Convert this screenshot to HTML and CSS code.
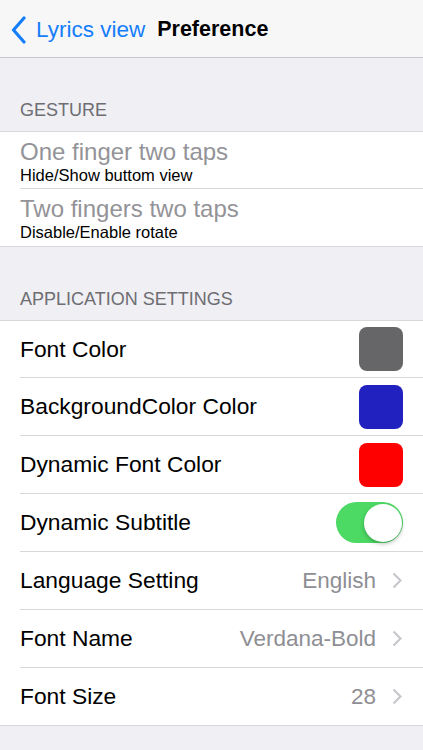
FILE: index.html
```html
<!DOCTYPE html>
<html lang="en">
<head>
    <meta charset="UTF-8">
    <meta name="viewport" content="width=device-width, initial-scale=1.0">
    <title>Preference</title>
    <link rel="stylesheet" href="styles.css">
</head>
<body>
    <header class="nav-bar">
        <a class="back-button" href="#">
            <svg class="back-chevron" width="16" height="28" viewBox="0 0 16 28">
                <path d="M13 2 L2.5 14 L13 26" fill="none" stroke="#157efb" stroke-width="3.2" stroke-linecap="round" stroke-linejoin="round"/>
            </svg>
            <span>Lyrics view</span>
        </a>
        <h1 class="nav-title">Preference</h1>
    </header>

    <main>
        <div class="section-header">GESTURE</div>
        <ul class="group">
            <li class="row row-double">
                <div class="row-title muted">One finger two taps</div>
                <div class="row-subtitle">Hide/Show buttom view</div>
            </li>
            <li class="row row-double">
                <div class="row-title muted">Two fingers two taps</div>
                <div class="row-subtitle">Disable/Enable rotate</div>
            </li>
        </ul>

        <div class="section-header">APPLICATION SETTINGS</div>
        <ul class="group">
            <li class="row">
                <span class="label">Font Color</span>
                <span class="swatch swatch-gray"></span>
            </li>
            <li class="row">
                <span class="label">BackgroundColor Color</span>
                <span class="swatch swatch-blue"></span>
            </li>
            <li class="row">
                <span class="label">Dynamic Font Color</span>
                <span class="swatch swatch-red"></span>
            </li>
            <li class="row">
                <span class="label">Dynamic Subtitle</span>
                <span class="toggle on"><span class="knob"></span></span>
            </li>
            <li class="row">
                <span class="label">Language Setting</span>
                <span class="value">English</span>
                <svg class="chevron" width="10" height="17" viewBox="0 0 10 17"><path d="M1.5 1.5 L8.5 8.5 L1.5 15.5" fill="none" stroke="#c7c7cc" stroke-width="2.2"/></svg>
            </li>
            <li class="row">
                <span class="label">Font Name</span>
                <span class="value">Verdana-Bold</span>
                <svg class="chevron" width="10" height="17" viewBox="0 0 10 17"><path d="M1.5 1.5 L8.5 8.5 L1.5 15.5" fill="none" stroke="#c7c7cc" stroke-width="2.2"/></svg>
            </li>
            <li class="row">
                <span class="label">Font Size</span>
                <span class="value">28</span>
                <svg class="chevron" width="10" height="17" viewBox="0 0 10 17"><path d="M1.5 1.5 L8.5 8.5 L1.5 15.5" fill="none" stroke="#c7c7cc" stroke-width="2.2"/></svg>
            </li>
        </ul>
    </main>
</body>
</html>
```

FILE: styles.css
```css
body {
    margin: 0;
    background-color: #efeff4;
    font-family: "Liberation Sans", Arial, sans-serif;
    color: #000;
}

.nav-bar {
    height: 58px;
    box-sizing: border-box;
    background-color: #f7f7f8;
    border-bottom: 1px solid #c8c7cc;
    display: flex;
    align-items: center;
    padding: 2px 0 0 11px;
}

.back-button {
    display: flex;
    align-items: center;
    color: #157efb;
    text-decoration: none;
    font-size: 22.5px;
}

.back-chevron {
    margin-right: 9px;
}

.nav-title {
    margin: 0 0 0 12px;
    font-size: 21.5px;
    font-weight: bold;
}

.section-header {
    height: 73px;
    box-sizing: border-box;
    padding: 42px 20px 0;
    font-size: 18px;
    line-height: 20px;
    color: #6d6d72;
}

.group {
    list-style: none;
    margin: 0;
    padding: 0 0 0 20px;
    background-color: #fff;
    border-top: 1px solid #d8d8dc;
    border-bottom: 1px solid #d8d8dc;
}

.row {
    height: 58px;
    box-sizing: border-box;
    display: flex;
    align-items: center;
    padding-right: 20px;
    border-bottom: 1px solid #d8d8dc;
}

.row:first-child {
    height: 57px;
}

.row:last-child {
    height: 57px;
    border-bottom: none;
}

.row-double {
    flex-direction: column;
    align-items: flex-start;
    justify-content: center;
    padding-top: 2px;
}

.row-title {
    font-size: 24px;
    line-height: 27px;
}

.muted {
    color: #939398;
}

.row-subtitle {
    font-size: 16.5px;
    line-height: 20px;
}

.label {
    flex-grow: 1;
    font-size: 22.8px;
}

.swatch {
    width: 44px;
    height: 44px;
    border-radius: 8px;
}

.swatch-gray {
    background-color: #666668;
}

.swatch-blue {
    background-color: #2121c0;
}

.swatch-red {
    background-color: #ff0000;
}

.toggle {
    width: 67px;
    height: 41px;
    box-sizing: border-box;
    border-radius: 21px;
    background-color: #4cd964;
    position: relative;
}

.knob {
    position: absolute;
    top: 1.5px;
    right: 1.5px;
    width: 38px;
    height: 38px;
    border-radius: 50%;
    background-color: #fff;
    box-shadow: 0 2px 4px rgba(0, 0, 0, 0.25);
}

.value {
    font-size: 22.5px;
    color: #8e8e93;
    margin-right: 16px;
}

.chevron {
    margin-right: 1px;
}
```
